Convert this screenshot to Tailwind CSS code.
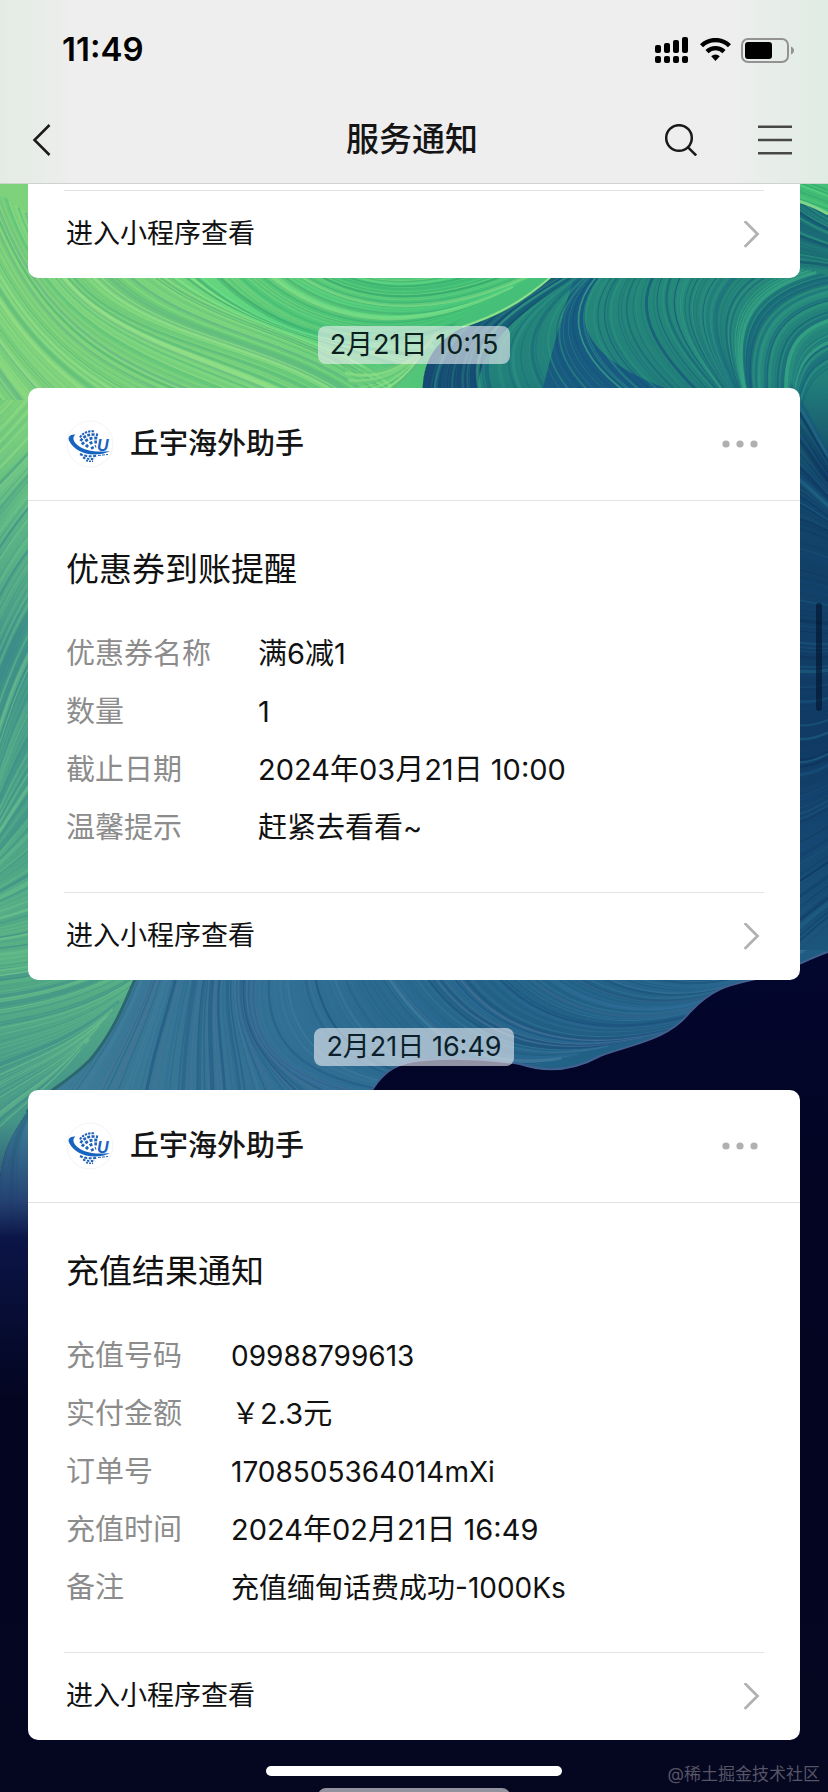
<!DOCTYPE html>
<html lang="zh-CN">
<head>
	<meta charset="UTF-8">
	<meta name="viewport" content="width=device-width, initial-scale=1">
	<title>服务通知</title>
	<script src="https://cdn.jsdelivr.net/npm/@tailwindcss/browser@4"></script>
</head>

<body class="relative flex flex-col h-screen overflow-hidden bg-[#03061c] text-[#111] font-['Inter','Noto_Sans_CJK_SC',sans-serif]">

	<!-- wallpaper -->
	<svg id="wallpaper" class="absolute inset-0 w-full h-full" viewBox="0 0 828 1792" preserveAspectRatio="none" fill="none" aria-hidden="true">
		<defs>
			<linearGradient id="leftBase" gradientUnits="userSpaceOnUse" x1="0" y1="180" x2="0" y2="1300">
				<stop offset="0" stop-color="#7dd47c"/>
				<stop offset=".2" stop-color="#7fd27b"/>
				<stop offset=".3" stop-color="#5fb985"/>
				<stop offset=".42" stop-color="#429689"/>
				<stop offset=".55" stop-color="#479e88"/>
				<stop offset=".7" stop-color="#59b284"/>
				<stop offset=".8" stop-color="#479a88"/>
				<stop offset="1" stop-color="#3b8386"/>
			</linearGradient>
			<linearGradient id="greenBase" gradientUnits="userSpaceOnUse" x1="60" y1="390" x2="430" y2="250">
				<stop offset="0" stop-color="#7fd27b"/>
				<stop offset=".5" stop-color="#70d07b"/>
				<stop offset="1" stop-color="#46c078"/>
			</linearGradient>
			<linearGradient id="rightBase" gradientUnits="userSpaceOnUse" x1="0" y1="190" x2="0" y2="980">
				<stop offset="0" stop-color="#176375"/>
				<stop offset=".12" stop-color="#258879"/>
				<stop offset=".24" stop-color="#22807b"/>
				<stop offset=".36" stop-color="#134569"/>
				<stop offset=".7" stop-color="#103a64"/>
				<stop offset="1" stop-color="#1d5a80"/>
			</linearGradient>
			<linearGradient id="blueBase" gradientUnits="userSpaceOnUse" x1="80" y1="0" x2="780" y2="0">
				<stop offset="0" stop-color="#3c7b95"/>
				<stop offset=".3" stop-color="#316f94"/>
				<stop offset=".6" stop-color="#236488"/>
				<stop offset="1" stop-color="#205b82"/>
			</linearGradient>
			<linearGradient id="nightFade" gradientUnits="userSpaceOnUse" x1="0" y1="1120" x2="0" y2="1400">
				<stop offset="0" stop-color="#25457a" stop-opacity="0"/>
				<stop offset=".28" stop-color="#20376c" stop-opacity=".8"/>
				<stop offset=".42" stop-color="#0b1547"/>
				<stop offset="1" stop-color="#030520"/>
			</linearGradient>
			<linearGradient id="night" gradientUnits="userSpaceOnUse" x1="0" y1="950" x2="0" y2="1792">
				<stop offset="0" stop-color="#03062e"/>
				<stop offset=".3" stop-color="#030522"/>
				<stop offset="1" stop-color="#050620"/>
			</linearGradient>
			<clipPath id="greenArea"><path d="M0 150H828V215C812 205 800 200 780 198L552 276C520 306 494 318 462 328C430 344 421 368 423 400H0Z"/></clipPath>
			<clipPath id="tealArea"><path d="M828 212C812 203 800 197 780 194L552 276C520 306 494 318 462 328C430 344 421 368 423 400V950H828Z"/></clipPath>
			<clipPath id="fanArea"><path d="M0 380H160L138 972C122 1010 112 1034 90 1060C64 1086 40 1095 27 1112C14 1132 2 1150 0 1180Z"/></clipPath>
			<clipPath id="blueArea"><path d="M138 960C122 1010 112 1034 90 1060C64 1086 40 1095 27 1112C14 1132 2 1150 0 1180V1290H60L372 1090C385 1070 398 1062 425 1060C465 1057 495 1060 520 1064C550 1074 578 1068 600 1056C632 1044 668 1040 690 1012C715 985 735 984 760 978C790 970 805 960 828 952V900H138Z"/></clipPath>
			<!-- globe shared by the card logos -->
			<symbol id="globe" viewBox="0 0 48 48">
				<circle cx="24" cy="24" r="23" fill="#fff" stroke="#f4f4f6"/>
				<g fill="none" stroke="#1f62b8">
					<path d="M14 17.500C17 12.500 23 10.500 29 11.500" stroke-width="2" stroke-dasharray="2.400 1"/>
					<path d="M14.500 21C18 15.500 25 13.500 32 15" stroke-width="2.600" stroke-dasharray="3 1.400"/>
					<path d="M16 24.500C20 19 26 17 33 18.500" stroke-width="2.800" stroke-dasharray="3 1.800"/>
					<path d="M20 27C23 23 27 21.500 31 22" stroke-width="3" stroke-dasharray="3 2"/>
					<path d="M25 28.500L30 26" stroke-width="2.600" stroke-dasharray="3 1.500"/>
					<path d="M14 34C19 36.500 25 37 31 35.500" stroke-width="2" stroke-dasharray="3 1.500"/>
					<path d="M17 37.500C21 39 25 39.500 29 38.500" stroke-width="2" stroke-dasharray="2.500 1.500"/>
					<path d="M20 40.500C23 41.500 25 41.500 27 41" stroke-width="1.500" stroke-dasharray="2 1"/>
					<path d="M32 35.500L42 34.500" stroke-width="1" stroke-dasharray="3 1"/>
				</g>
				<path d="M9.500 14.500C4 14 1 17 3.500 21.500C7 28.500 17 34.500 28 34.500C34 34.500 40 33.500 44 31C30 32.500 19 31 12 25.500C7 21.500 6 17 9.500 14.500Z" fill="#1763c0"/>
			</symbol>
		</defs>
		<rect width="828" height="1792" fill="url(#night)"/>
		<g clip-path="url(#blueArea)">
			<rect x="0" y="900" width="828" height="400" fill="url(#blueBase)"/>
			<g id="blueLines"></g>
		</g>
		<g clip-path="url(#fanArea)">
			<rect y="380" width="160" height="820" fill="url(#leftBase)"/>
			<g id="fanLines"></g>
		</g>
		<rect y="1120" width="60" height="280" fill="url(#nightFade)"/>
		<g clip-path="url(#tealArea)">
			<rect x="400" y="180" width="428" height="780" fill="url(#rightBase)"/>
			<path d="M552 276C520 306 494 318 462 328C430 344 421 368 423 400H480C470 350 520 310 580 276Z" fill="#164a72"/>
			<path d="M600 276C560 330 600 370 700 400H540C550 360 560 320 575 276Z" fill="#185a80"/>
			<g id="tealLines"></g>
		</g>
		<g clip-path="url(#greenArea)">
			<rect y="150" width="828" height="320" fill="url(#greenBase)"/>
			<g id="greenLines"></g>
		</g>
		<path d="M828 214C812 205 800 200 780 198" stroke="#7fd68b" stroke-width="3"/>
		<path d="M552 276C520 304 494 316 462 327" stroke="#8fe08c" stroke-width="2"/>
		<path d="M828 952C805 960 790 970 760 978C735 984 715 985 690 1012C668 1040 632 1044 600 1056C578 1068 550 1074 520 1064C495 1060 465 1057 425 1060C398 1062 385 1070 372 1090" stroke="#41608f" stroke-width="2"/>
		<path d="M138 972C122 1010 112 1034 90 1060C64 1086 40 1095 27 1112" stroke="#2c6670" stroke-width="3"/>
	</svg>

	<header class="relative border-b border-[#cfd3d0] bg-[linear-gradient(90deg,#e4ebe4,#eeeeee_10%,#eeeeee_88%,#dfece3)]">
		<div class="flex items-center justify-between h-[100px] pl-[62px] pr-[34px] text-black">
			<time class="text-[33px] font-semibold">11:49</time>
			<div class="flex items-center">
				<svg class="w-[33px] h-[26px] mr-3" viewBox="0 0 33 26" role="img" aria-label="信号">
					<rect x="0" y="8" width="6" height="8" rx="2"/><rect x="9" y="6" width="6" height="10" rx="2"/><rect x="18" y="3" width="6" height="13" rx="2"/><rect x="27" y="0" width="6" height="16" rx="2"/>
					<rect x="0" y="19" width="6" height="7" rx="2"/><rect x="9" y="19" width="6" height="7" rx="2"/><rect x="18" y="19" width="6" height="7" rx="2"/><rect x="27" y="19" width="6" height="7" rx="2"/>
				</svg>
				<svg class="w-[31px] h-6 mr-2.5" viewBox="0 0 31 24" fill="none" stroke="#000" role="img" aria-label="无线网络">
					<path d="M1.500 7.800a20 20 0 0 1 28 0" stroke-width="4.400"/>
					<path d="M7 13.600a12.200 12.200 0 0 1 17 0" stroke-width="4.400"/>
					<path d="M11.200 18.200a6.400 6.400 0 0 1 8.600 0L15.500 23Z" fill="#000" stroke="none"/>
				</svg>
				<svg class="w-[53px] h-[25px]" viewBox="0 0 53 25" role="img" aria-label="电量">
					<rect x="1" y="1" width="46" height="23" rx="6" fill="none" stroke="#929292" stroke-width="2"/>
					<rect x="4" y="4" width="27" height="17" rx="3"/>
					<path d="M50 8.500c4 1.500 4 6.500 0 8Z" fill="#929292"/>
				</svg>
			</div>
		</div>
		<nav class="grid grid-cols-[1fr_auto_1fr] items-center h-20 mb-[3px] pl-8 pr-9">
			<button class="w-5 h-8" aria-label="返回">
				<svg class="w-5 h-8" viewBox="0 0 20 32" fill="none" stroke="#1a1a1a" stroke-width="2.500"><path d="M17.500 1L2.500 16L17.500 31"/></svg>
			</button>
			<h1 class="text-[33px] font-medium text-[#151515]">服务通知</h1>
			<div class="flex items-center justify-end gap-[61px]">
				<button aria-label="搜索">
					<svg class="block w-8 h-8" viewBox="0 0 32 32" fill="none" stroke="#1a1a1a" stroke-width="2.500"><circle cx="14" cy="14" r="12.800"/><path d="M22.800 23.200L31.200 31.500"/></svg>
				</button>
				<button aria-label="菜单">
					<svg class="block w-[34px] h-8" viewBox="0 0 34 32" stroke="#484848" stroke-width="2.600"><path d="M0 2.700H34M0 16H34M0 29.300H34"/></svg>
				</button>
			</div>
		</nav>
	</header>

	<main class="relative flex-1 overflow-hidden px-7">
		<article class="bg-white rounded-b-[10px] pt-1.5">
			<a href="#" class="flex items-center justify-between h-[88px] mx-9 pl-0.5 pr-1 border-t border-[#e2e2e2]">
				<span class="text-[27px]">进入小程序查看</span>
				<svg class="w-[18px] h-7" viewBox="0 0 18 28" fill="none" stroke="#b2b2b2" stroke-width="2.800" stroke-linecap="round"><path d="M3.500 1L15.500 13L3.500 25"/></svg>
			</a>
		</article>

		<div class="flex justify-center mt-12 mb-6">
			<time class="h-[38px] leading-[38px] px-3 rounded-lg bg-[#f0f0f5]/60 text-[27px] text-[#0b1f1c]">2月21日 10:15</time>
		</div>

		<article class="bg-white rounded-[10px]">
			<div class="flex items-center h-[113px] pl-[38px] pr-[42px] border-b border-[#e2e2e2]">
				<svg class="w-12 h-12 mr-4" viewBox="0 0 48 48" aria-hidden="true">
					<use href="#globe"/>
					<text x="31" y="31" font-family="Liberation Sans, sans-serif" font-size="16" font-weight="700" font-style="italic" fill="#1763c0">U</text>
				</svg>
				<h2 class="flex-1 text-[29px] font-medium text-[#151515]">丘宇海外助手</h2>
				<button aria-label="更多">
					<svg class="block w-9 h-7" viewBox="0 0 36 28" fill="#b0b0b0"><circle cx="4" cy="14" r="3.600"/><circle cx="18" cy="14" r="3.600"/><circle cx="32" cy="14" r="3.600"/></svg>
				</button>
			</div>
			<div class="px-[38px] pt-10 pb-[35px]">
				<h3 class="mb-7 text-[33px] leading-[56px]">优惠券到账提醒</h3>
				<dl class="grid grid-cols-[192px_1fr] text-[29px] leading-[58px]">
					<dt class="text-[#8c8c8c]">优惠券名称</dt><dd>满6减1</dd>
					<dt class="text-[#8c8c8c]">数量</dt><dd>1</dd>
					<dt class="text-[#8c8c8c]">截止日期</dt><dd>2024年03月21日 10:00</dd>
					<dt class="text-[#8c8c8c]">温馨提示</dt><dd>赶紧去看看~</dd>
				</dl>
			</div>
			<a href="#" class="flex items-center justify-between h-[88px] mx-9 pl-0.5 pr-1 border-t border-[#e2e2e2]">
				<span class="text-[27px]">进入小程序查看</span>
				<svg class="w-[18px] h-7" viewBox="0 0 18 28" fill="none" stroke="#b2b2b2" stroke-width="2.800" stroke-linecap="round"><path d="M3.500 1L15.500 13L3.500 25"/></svg>
			</a>
		</article>

		<div class="flex justify-center mt-12 mb-6">
			<time class="h-[38px] leading-[38px] px-3 rounded-lg bg-[#f0f0f5]/60 text-[27px] text-[#0b1f2c]">2月21日 16:49</time>
		</div>

		<article class="bg-white rounded-[10px]">
			<div class="flex items-center h-[113px] pl-[38px] pr-[42px] border-b border-[#e2e2e2]">
				<svg class="w-12 h-12 mr-4" viewBox="0 0 48 48" aria-hidden="true">
					<use href="#globe"/>
					<text x="31" y="31" font-family="Liberation Sans, sans-serif" font-size="16" font-weight="700" font-style="italic" fill="#1763c0">U</text>
				</svg>
				<h2 class="flex-1 text-[29px] font-medium text-[#151515]">丘宇海外助手</h2>
				<button aria-label="更多">
					<svg class="block w-9 h-7" viewBox="0 0 36 28" fill="#b0b0b0"><circle cx="4" cy="14" r="3.600"/><circle cx="18" cy="14" r="3.600"/><circle cx="32" cy="14" r="3.600"/></svg>
				</button>
			</div>
			<div class="px-[38px] pt-10 pb-[35px]">
				<h3 class="mb-7 text-[33px] leading-[56px]">充值结果通知</h3>
				<dl class="grid grid-cols-[165px_1fr] text-[29px] leading-[58px]">
					<dt class="text-[#8c8c8c]">充值号码</dt><dd class="text-[28px] leading-[58px]">09988799613</dd>
					<dt class="text-[#8c8c8c]">实付金额</dt><dd>￥2.3元</dd>
					<dt class="text-[#8c8c8c]">订单号</dt><dd class="text-[28px] leading-[58px]">1708505364014mXi</dd>
					<dt class="text-[#8c8c8c]">充值时间</dt><dd>2024年02月21日 16:49</dd>
					<dt class="text-[#8c8c8c]">备注</dt><dd class="text-[28px] leading-[58px]">充值缅甸话费成功-1000Ks</dd>
				</dl>
			</div>
			<a href="#" class="flex items-center justify-between h-[88px] mx-9 pl-0.5 pr-1 border-t border-[#e2e2e2]">
				<span class="text-[27px]">进入小程序查看</span>
				<svg class="w-[18px] h-7" viewBox="0 0 18 28" fill="none" stroke="#b2b2b2" stroke-width="2.800" stroke-linecap="round"><path d="M3.500 1L15.500 13L3.500 25"/></svg>
			</a>
		</article>

		<div class="flex justify-center mt-12">
			<div class="w-48 h-[38px] rounded-lg bg-[#f0f0f5]/60"></div>
		</div>
	</main>

	<div class="absolute right-1.5 top-[603px] w-1.5 h-[108px] rounded-full bg-[#02122c]/60"></div>
	<div class="absolute bottom-4 left-1/2 -translate-x-1/2 w-[296px] h-2.5 rounded-full bg-white"></div>
	<p class="absolute bottom-1.5 right-2 text-[17px] leading-6 text-[#555565]">@稀土掘金技术社区</p>

	<script>
		// Each flow is a list of key curves (8 numbers: M x y C x y x y x y);
		// the strokes in between are blended from one key curve to the next.
		let seed = 7;
		function rand() {
			seed = (seed * 16807) % 2147483647;
			return seed / 2147483647;
		}

		function drawFlow(id, keys, steps, colors, opacity) {
			let out = "";
			for (let k = 0; k < keys.length - 1; k++) {
				for (let i = 0; i < steps; i++) {
					const t = (i + rand() * 0.8) / steps;
					const p = keys[k].map((v, j) => (v + (keys[k + 1][j] - v) * t).toFixed(1));
					const color = colors[Math.floor(rand() * colors.length)];
					const width = (0.6 + rand() * rand() * 4.5).toFixed(1);
					out += `<path d="M${p[0]} ${p[1]}C${p.slice(2).join(" ")}" stroke="${color}" stroke-width="${width}" opacity="${(opacity * (0.4 + rand() * 0.6)).toFixed(2)}"/>`;
				}
			}
			document.getElementById(id).innerHTML += out;
		}

		const greens = ["#94e287", "#8bdd84", "#5cc47c", "#6ac87c", "#58b87a", "#9be38a", "#62b486"];
		const deepGreens = ["#5ad983", "#36ad70", "#2fa46c", "#6be089", "#45c377"];
		const teals = ["#2f9a80", "#176478", "#39a886", "#1c6c80", "#14507a", "#2b8f84"];
		const seas = ["#68c08c", "#3d8f88", "#7acb90", "#38868a", "#5bb088"];
		const blues = ["#417fa0", "#245a84", "#37769a", "#1d4f7c", "#4f7199", "#2f6d98"];

		drawFlow("greenLines", [
			[-150, 200, -90, 330, -40, 400, 30, 480],
			[-90, 200, -40, 330, 20, 400, 90, 480],
			[-20, 180, 30, 330, 100, 380, 260, 420],
			[50, 230, 90, 350, 240, 330, 350, 410],
			[120, 230, 190, 330, 320, 320, 400, 400]
		], 34, greens, 0.7);
		drawFlow("greenLines", [
			[120, 230, 190, 330, 320, 320, 380, 400],
			[200, 240, 260, 330, 360, 370, 470, 310],
			[260, 240, 320, 310, 420, 330, 540, 270],
			[300, 240, 360, 290, 420, 290, 520, 250]
		], 26, deepGreens.concat(["#8be589"]), 0.7);
		drawFlow("greenLines", [
			[360, 410, 400, 390, 415, 370, 430, 340],
			[340, 360, 380, 380, 410, 360, 440, 330]
		], 12, greens, 0.8);
		drawFlow("greenLines", [
			[780, 170, 800, 180, 815, 185, 840, 195],
			[780, 195, 800, 200, 815, 205, 840, 215]
		], 12, deepGreens, 0.8);

		drawFlow("tealLines", [
			[550, 270, 490, 310, 420, 330, 424, 410],
			[585, 270, 520, 310, 460, 340, 500, 410],
			[600, 270, 550, 320, 580, 370, 650, 410],
			[680, 260, 640, 310, 690, 360, 735, 410],
			[760, 260, 690, 300, 720, 350, 745, 410],
			[850, 280, 760, 290, 740, 340, 755, 410],
			[850, 320, 790, 330, 790, 360, 790, 410],
			[850, 360, 820, 370, 805, 380, 800, 420]
		], 18, teals, 0.75);
		drawFlow("tealLines", [
			[790, 190, 805, 205, 820, 215, 840, 225],
			[790, 270, 805, 268, 820, 270, 840, 272]
		], 22, ["#14506e", "#2f9a80", "#176478"], 0.7);
		drawFlow("tealLines", [
			[790, 380, 805, 400, 820, 440, 840, 470],
			[790, 520, 805, 518, 820, 530, 840, 536],
			[790, 740, 805, 746, 820, 740, 840, 730],
			[790, 960, 805, 950, 820, 930, 840, 920]
		], 45, ["#0c2f58", "#1c5a84", "#15487a", "#0f3d66", "#226a8a"], 0.6);

		drawFlow("fanLines", [
			[-20, 380, 5, 370, 20, 340, 50, 310],
			[-20, 500, 5, 480, 20, 460, 50, 430]
		], 30, greens, 0.6);
		drawFlow("fanLines", [
			[-20, 500, 5, 480, 20, 460, 50, 430],
			[-20, 640, 5, 590, 20, 560, 50, 530],
			[-20, 820, 0, 760, 10, 700, 50, 640],
			[-20, 880, 5, 850, 20, 840, 50, 800],
			[-20, 950, 40, 950, 100, 930, 160, 900],
			[-20, 1030, 40, 1020, 90, 1010, 140, 975],
			[-20, 1150, 10, 1110, 40, 1100, 80, 1050]
		], 30, seas, 0.6);

		drawFlow("blueLines", [
			[140, 960, 120, 1020, 90, 1060, 50, 1110],
			[185, 960, 175, 1010, 160, 1050, 155, 1110],
			[235, 960, 225, 1010, 245, 1050, 250, 1110],
			[260, 960, 240, 1050, 290, 1080, 380, 1095],
			[360, 960, 390, 1010, 430, 1080, 530, 1066],
			[450, 960, 490, 1030, 570, 1060, 690, 1025],
			[570, 960, 620, 1000, 690, 1010, 770, 970],
			[700, 960, 730, 970, 790, 960, 840, 930]
		], 22, blues, 0.7);
		drawFlow("blueLines", [
			[40, 1100, 20, 1130, 10, 1150, 30, 1290],
			[10, 1130, 0, 1160, -5, 1200, 0, 1290]
		], 10, ["#2f7a86", "#255a7a"], 0.5);
	</script>
</body>

</html>
